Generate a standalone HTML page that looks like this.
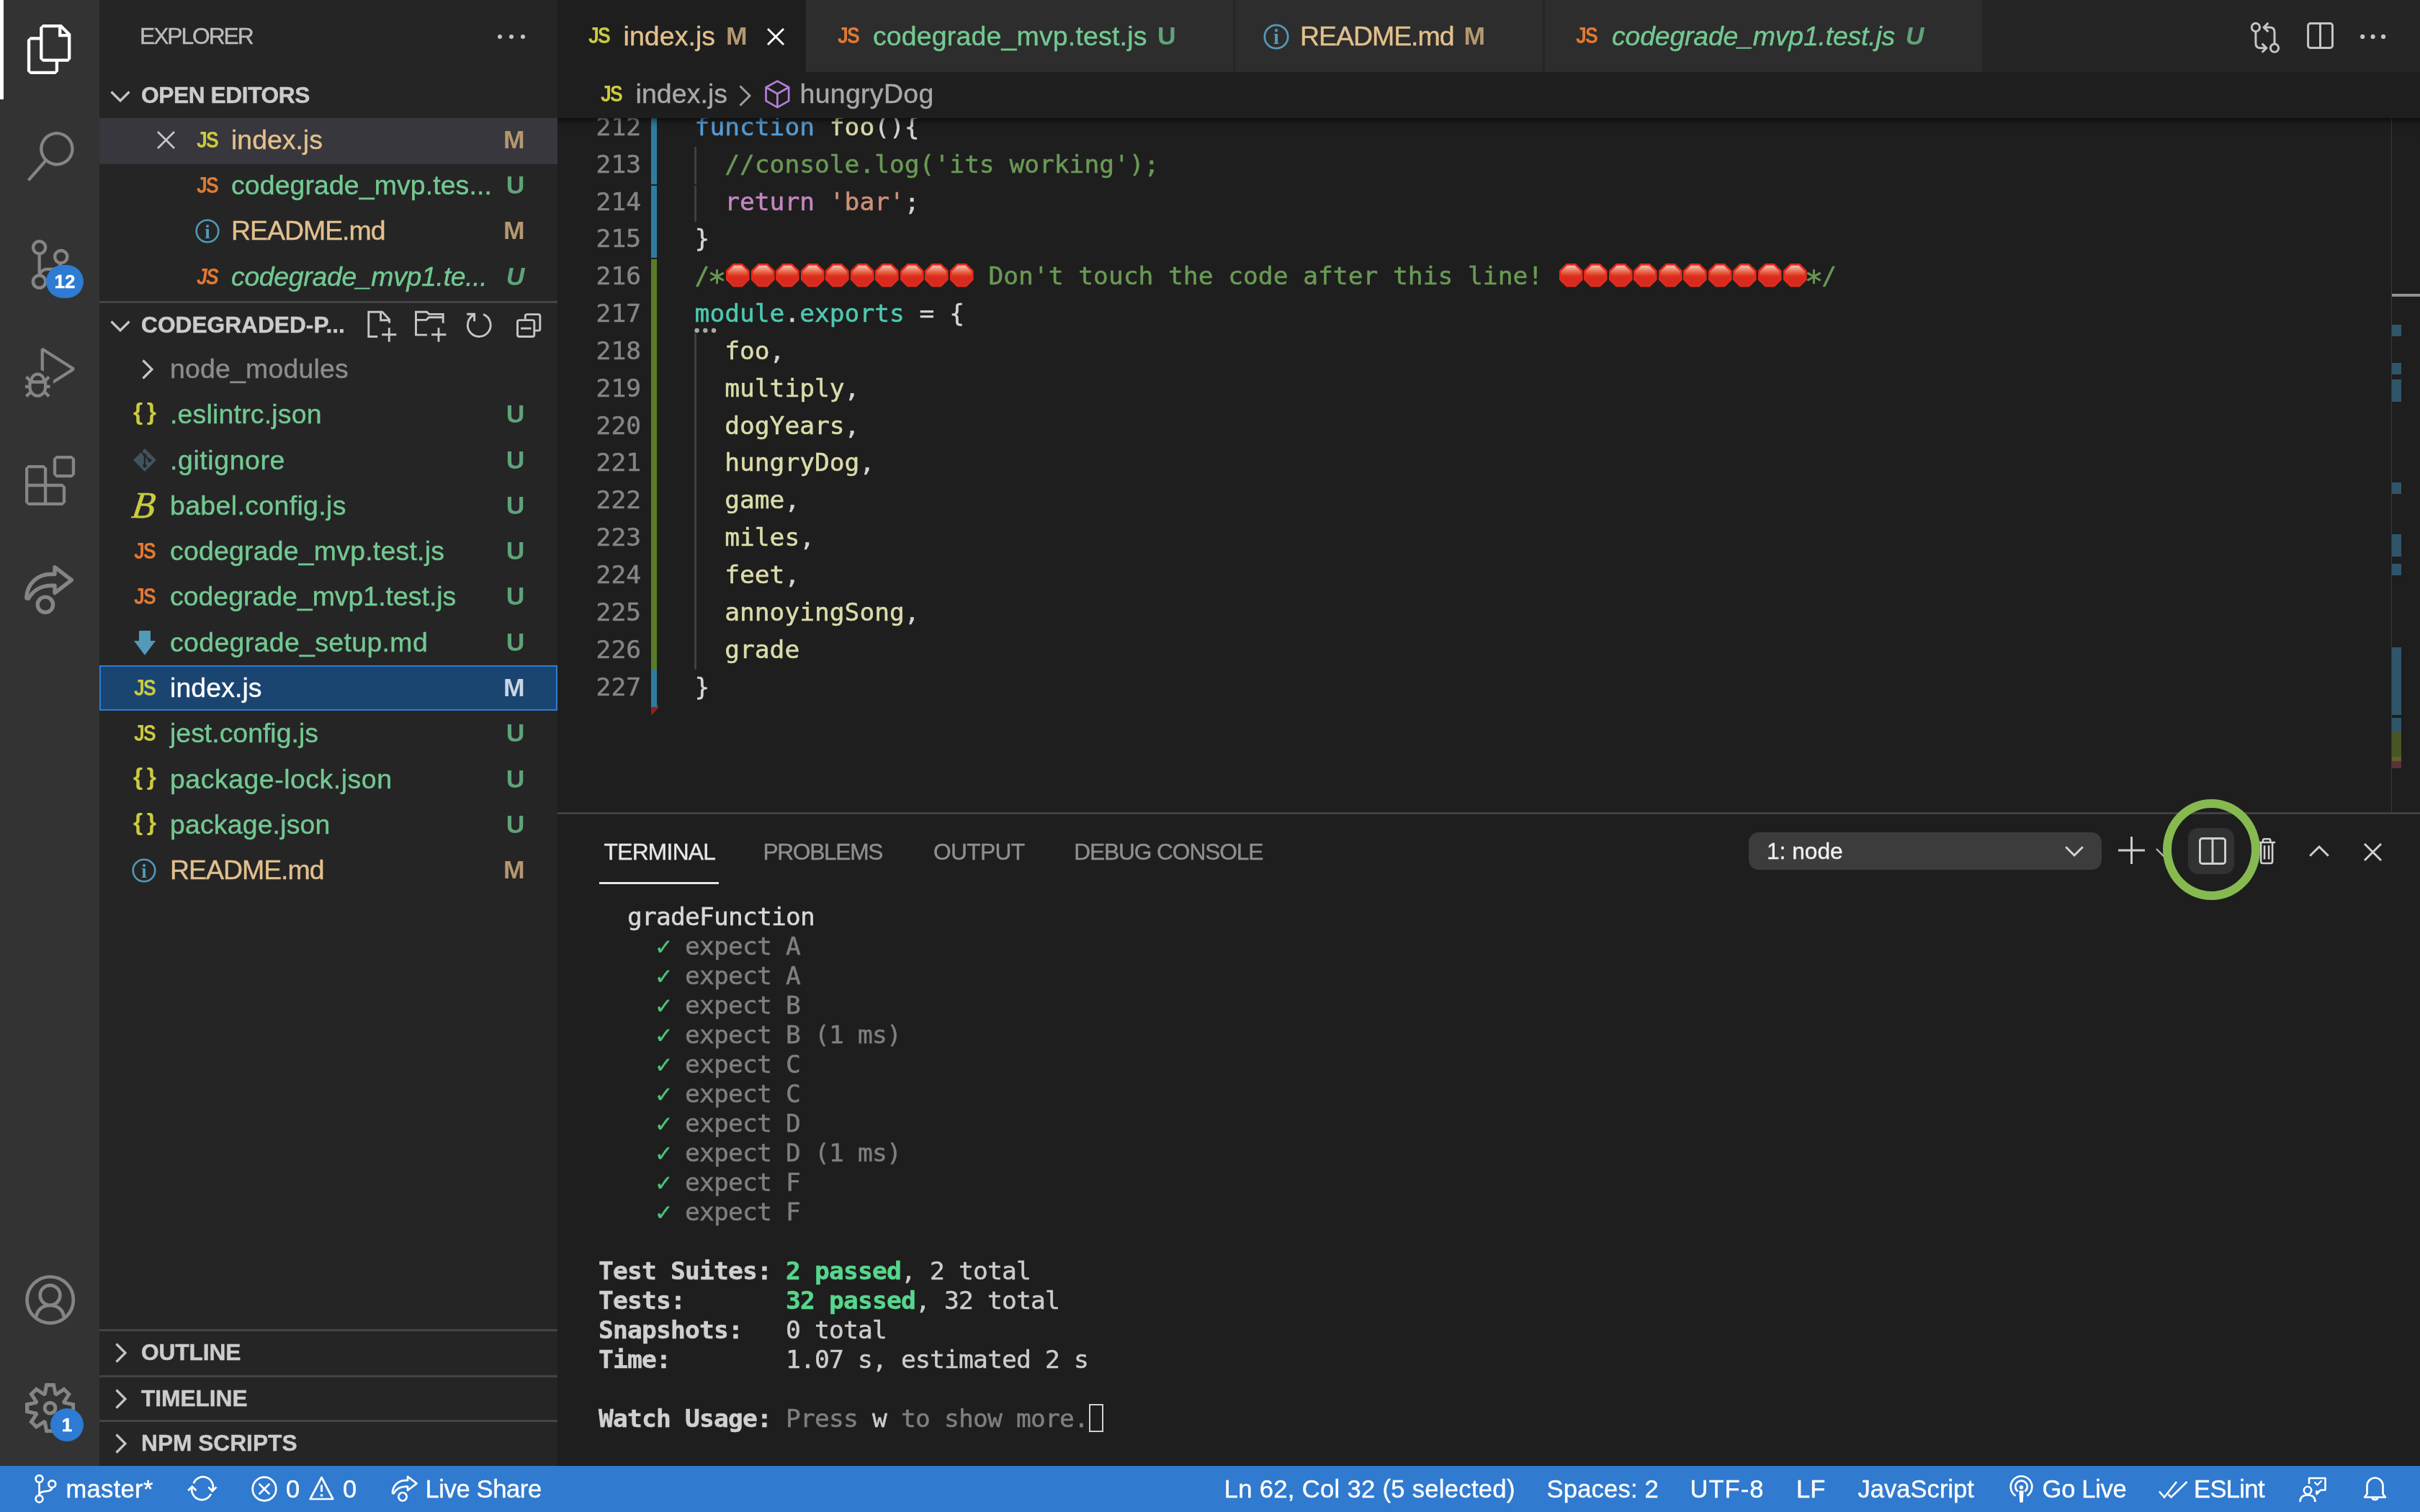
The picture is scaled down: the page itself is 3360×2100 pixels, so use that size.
<!DOCTYPE html>
<html lang="en">
<head>
<meta charset="utf-8">
<title>index.js — codegraded-project — Visual Studio Code</title>
<style>
html,body{margin:0;padding:0;width:3360px;height:2100px;overflow:hidden;background:#1e1e1e;}
body{font-family:"Liberation Sans",sans-serif;position:relative;color:#cccccc;-webkit-font-smoothing:antialiased;-webkit-text-stroke:0.4px;}
div,span,svg{box-sizing:border-box;}
#activity,#sidebar,#tabs,#crumbs,#editor,#panel,#status,#anno{will-change:transform;}
.abs{position:absolute;}
svg{display:block;overflow:visible;}
/* ---------- activity bar ---------- */
#activity{position:absolute;left:0;top:0;width:138px;height:2037px;background:#333333;}
#activity .ind{position:absolute;left:0;top:0;width:5px;height:138px;background:#ffffff;}
#activity svg{position:absolute;}
.badge{position:absolute;border-radius:50%;background:#2d7bd2;color:#fff;font-weight:bold;text-align:center;}
/* ---------- sidebar ---------- */
#sidebar{position:absolute;left:138px;top:0;width:636px;height:2037px;background:#252526;overflow:hidden;}
.sbtitle{position:absolute;left:56px;top:0;height:101px;line-height:101px;font-size:31.7px;color:#bbbbbb;letter-spacing:-2px;}
.hdr{position:absolute;left:0;width:636px;height:63.36px;line-height:63.36px;font-size:31.7px;font-weight:bold;color:#cccccc;}
.hdr .t{position:absolute;left:58px;top:0;white-space:nowrap;}
.hdr svg{position:absolute;}
.hline{position:absolute;left:0;width:636px;height:3px;background:#444444;}
.row{position:absolute;left:0;width:636px;height:63.36px;line-height:63.36px;font-size:37.44px;white-space:nowrap;}
.row .l{position:absolute;top:0;}
.row .s{position:absolute;top:0;right:45.5px;text-align:right;font-size:35.5px;font-weight:bold;-webkit-text-stroke:0;}
.row svg,.row .ic{position:absolute;}
.g{color:#73c991;} .m{color:#e2c08d;} .gs{color:#5fa379;} .ms{color:#b49870;}
.jsy{color:#cbcb41;} .jso{color:#e37933;} .w{color:#ffffff;} .ws{color:#c9d6e4;}
.ic.br{font-size:34px;letter-spacing:-2px;transform:translateY(-4.5px);} .ic.bb{font-family:"Liberation Serif",serif;font-style:italic;font-weight:normal;font-size:52px;transform:translate(-2px,-1px) skewX(-8deg);-webkit-text-stroke:0.6px;}
.ic{font-weight:bold;font-size:31px;letter-spacing:-2px;transform:scaleX(.86);transform-origin:0 50%;-webkit-text-stroke:0;}
/* ---------- status bar ---------- */
#status{position:absolute;left:0;top:2036px;width:3360px;height:64px;background:#307acf;color:#ffffff;font-size:34.56px;line-height:64px;white-space:nowrap;}
#status .t{position:absolute;top:0;}
#status svg{position:absolute;}
/* ---------- editor ---------- */
#tabs{position:absolute;left:774px;top:0;width:2586px;height:100px;background:#252526;}
.tab{position:absolute;top:0;height:100px;background:#2d2d2d;line-height:100px;font-size:37.44px;white-space:nowrap;}
.tab.act{background:#1e1e1e;}
.tab .l,.tab .s{position:absolute;top:0;}
.tab .s{font-size:35.5px;font-weight:bold;-webkit-text-stroke:0;}
.tab svg,.tab .ic{position:absolute;}
#crumbs{position:absolute;left:774px;top:100px;width:2586px;height:64px;background:#1e1e1e;line-height:61px;font-size:37.44px;color:#a9a9a9;white-space:nowrap;z-index:5;}
#crumbs .l{position:absolute;top:0;}
#crumbs svg,#crumbs .ic{position:absolute;}
#editor{position:absolute;left:774px;top:164px;width:2586px;height:964px;background:#1e1e1e;overflow:hidden;}
.code{font-family:"DejaVu Sans Mono","Liberation Mono",monospace;font-size:34.56px;-webkit-text-stroke:0.5px;}
.ln{position:absolute;left:0;width:116px;text-align:right;height:51.84px;line-height:51.84px;color:#858585;}
.cl{position:absolute;left:190.6px;height:51.84px;line-height:51.84px;white-space:pre;color:#d4d4d4;}
.k{color:#569cd6;} .f{color:#dcdcaa;} .c{color:#6a9955;} .r{color:#c586c0;} .st{color:#ce9178;} .ty{color:#4ec9b0;} .v{color:#dcdcaa;}
.em{display:inline-block;width:34.56px;height:34.56px;vertical-align:-3.8px;margin-left:0.8px;margin-right:-0.8px;}
.ast{display:inline-block;transform:translateY(8px) scale(1.25);}
/* ---------- panel ---------- */
#panel{position:absolute;left:774px;top:1128px;width:2586px;height:909px;background:#1e1e1e;border-top:3px solid #414141;overflow:hidden;}
.ptab{position:absolute;top:22px;height:60px;line-height:60px;font-size:31.7px;color:#8f8f8f;white-space:nowrap;}
.ptab.on{color:#e7e7e7;}
.tl{position:absolute;left:57px;height:41px;line-height:41px;white-space:pre;color:#cccccc;letter-spacing:-0.8px;}
.tw{color:#d8d8d8;} .cur{display:inline-block;width:20px;height:39px;border:2.5px solid #d0d0d0;vertical-align:-7.5px;margin-left:1px;}
.tg{color:#4ec27a;} .td{color:#7f7f7f;} .tb{font-weight:bold;color:#d0d0d0;} .tgb{color:#58d68d;font-weight:bold;}
</style>
</head>
<body>
<div id="activity">
  <div class="ind"></div>
  <!-- files -->
  <svg style="left:34.5px;top:34px" width="69.12" height="69.12" viewBox="0 0 24 24" fill="#ffffff"><path d="M17.5 0h-9L7 1.5V6H2.5L1 7.5v15.07L2.5 24h12.07L16 22.57V18h4.7l1.3-1.43V4.5L17.5 0zm0 2.12l2.38 2.38H17.5V2.12zm-3 20.38h-12v-15H7v9.07L8.5 18h6v4.5zm6-6h-12v-15H16V6h4.5v10.5z"/></svg>
  <!-- search -->
  <svg style="left:34.5px;top:183px" width="69.12" height="69.12" viewBox="0 0 24 24" fill="#858585"><path d="M15.25 0a8.25 8.25 0 0 0-6.18 13.72L1 22.88l1.12 1 8.05-9.12A8.251 8.251 0 1 0 15.25.01V0zm0 15a6.75 6.75 0 1 1 0-13.5 6.75 6.75 0 0 1 0 13.5z"/></svg>
  <!-- source control -->
  <svg style="left:34.5px;top:333.3px" width="69.12" height="69.12" viewBox="0 0 24 24" fill="#858585"><path d="M21.007 8.222A3.738 3.738 0 0 0 15.045 5.2a3.737 3.737 0 0 0 1.156 6.583 2.988 2.988 0 0 1-2.668 1.67h-2.99a4.456 4.456 0 0 0-2.989 1.165V7.4a3.737 3.737 0 1 0-1.494 0v9.117a3.776 3.776 0 1 0 1.816.099 2.99 2.99 0 0 1 2.668-1.667h2.99a4.484 4.484 0 0 0 4.223-3.039 3.736 3.736 0 0 0 3.25-3.687zM4.565 3.738a2.242 2.242 0 1 1 4.484 0 2.242 2.242 0 0 1-4.484 0zm4.484 16.441a2.242 2.242 0 1 1-4.484 0 2.242 2.242 0 0 1 4.484 0zm8.221-9.715a2.242 2.242 0 1 1 0-4.485 2.242 2.242 0 0 1 0 4.485z"/></svg>
  <div class="badge" style="left:64px;top:368px;width:52px;height:46px;border-radius:23px;line-height:46px;font-size:26px;">12</div>
  <!-- debug -->
  <svg style="left:34.5px;top:483.3px" width="69.12" height="69.12" viewBox="0 0 24 24" fill="#858585"><path d="M10.94 13.5l-1.32 1.32a3.73 3.73 0 0 0-7.24 0L1.06 13.5 0 14.56l1.72 1.72-.22.22V18H0v1.5h1.5v.08c.077.489.214.966.41 1.42L0 22.94 1.06 24l1.65-1.65A4.308 4.308 0 0 0 6 24a4.31 4.31 0 0 0 3.29-1.65L10.94 24 12 22.94 10.09 21c.198-.464.336-.951.41-1.45v-.1H12V18h-1.5v-1.5l-.22-.22L12 14.56l-1.06-1.06zM6 13.5a2.25 2.25 0 0 1 2.25 2.25h-4.5A2.25 2.25 0 0 1 6 13.5zm3 6a3.33 3.33 0 0 1-3 3 3.33 3.33 0 0 1-3-3v-2.25h6v2.25zm14.76-9.9v1.26L13.5 17.37V15.6l8.5-5.37L9 2v9.46a5.07 5.07 0 0 0-1.5-.72V.63L8.64 0l15.12 9.6z"/></svg>
  <!-- extensions -->
  <svg style="left:34.5px;top:633px" width="69.12" height="69.12" viewBox="0 0 24 24" fill="#858585"><path d="M13.5 1.5L15 0h7.5L24 1.5V9l-1.5 1.5H15L13.5 9V1.5zm1.5 0V9h7.5V1.5H15zM0 15V6l1.5-1.5H9L10.5 6v7.5H18l1.5 1.5v7.5L18 24H1.5L0 22.5V15zm9-1.5V6H1.5v7.5H9zM9 15H1.5v7.5H9V15zm1.5 7.5H18V15h-7.5v7.5z"/></svg>
  <!-- live share -->
  <svg style="left:20px;top:760px" width="100" height="120" viewBox="0 0 100 120" fill="none" stroke="#858585" stroke-width="5.4" stroke-linejoin="round"><path d="M16.7 70.6 C17.5 50 33 37.5 50 37.5 L56 37.5 L56 27.6 L79.4 45.6 L56 63.5 L56 53.3 L52 53.3 C38 53.3 26 59.5 19.5 71.5 Z"/><circle cx="42.9" cy="79.8" r="10.7"/></svg>
  <!-- account -->
  <svg style="left:34.5px;top:1771px" width="69.12" height="69.12" viewBox="0 0 24 24" fill="none" stroke="#858585" stroke-width="1.62"><circle cx="12.05" cy="11.95" r="11.18"/><circle cx="12" cy="9.72" r="4.8"/><path d="M5.3 20.2 C5.8 16.5 8.5 14.6 12 14.6 C15.5 14.6 18.2 16.5 18.7 20.2"/></svg>
  <!-- gear -->
  <svg style="left:34.5px;top:1920.5px" width="69.12" height="69.12" viewBox="0 0 24 24" fill="#858585"><path fill-rule="evenodd" d="M19.85 8.75l4.15.83v4.84l-4.15.83 2.35 3.52-3.43 3.43-3.52-2.35-.83 4.15H9.58l-.83-4.15-3.52 2.35-3.43-3.43 2.35-3.52L0 14.42V9.58l4.15-.83L1.8 5.23 5.23 1.8l3.52 2.35L9.58 0h4.84l.83 4.15 3.52-2.35 3.43 3.43-2.35 3.52zm-1.57 5.07l4-.81v-2l-4-.81-.54-1.3 2.29-3.43-1.43-1.43-3.43 2.29-1.3-.54-.81-4h-2l-.81 4-1.3.54-3.43-2.29-1.43 1.43L6.38 8.9l-.54 1.3-4 .81v2l4 .81.54 1.3-2.29 3.43 1.43 1.43 3.43-2.29 1.3.54.81 4h2l.81-4 1.3-.54 3.43 2.29 1.43-1.43-2.29-3.43.54-1.3zm-8.186-4.672A3.43 3.43 0 0 1 12 8.57 3.44 3.44 0 0 1 15.43 12a3.43 3.43 0 1 1-5.336-2.852zm.956 4.274c.281.188.612.288.95.288A1.7 1.7 0 0 0 13.71 12a1.71 1.71 0 1 0-2.66 1.422z"/></svg>
  <div class="badge" style="left:70px;top:1956px;width:46px;height:46px;line-height:46px;font-size:26px;">1</div>
</div>
<div id="sidebar">
  <div class="sbtitle">EXPLORER</div>
  <svg class="abs" style="left:552px;top:47px" width="40" height="8" viewBox="0 0 40 8" fill="#c5c5c5"><circle cx="4" cy="4" r="3"/><circle cx="20" cy="4" r="3"/><circle cx="36" cy="4" r="3"/></svg>
  <div class="hdr" style="top:100.8px"><svg style="left:15px;top:25px" width="28" height="16" viewBox="0 0 28 16" fill="none" stroke="#c5c5c5" stroke-width="3.2"><path d="M1.5 1.5 L14 14 L26.5 1.5"/></svg><span class="t" style="letter-spacing:-0.4px">OPEN EDITORS</span></div>
  <div class="abs" style="left:0;top:163.7px;width:636px;height:64.3px;background:#37373d"></div>
  <div class="row" style="top:162.9px"><svg style="left:80px;top:19px" width="25" height="25" viewBox="0 0 25 25" fill="none" stroke="#c5c5c5" stroke-width="2.8"><path d="M1 1 L24 24 M24 1 L1 24"/></svg><span class="ic jsy" style="left:135px;top:0">JS</span><span class="l m" style="left:183px">index.js</span><span class="s ms">M</span></div>
  <div class="row" style="top:226.10px"><span class="ic jso" style="left:135px;top:0">JS</span><span class="l g" style="left:183px;letter-spacing:0.1px">codegrade_mvp.tes...</span><span class="s gs">U</span></div>
  <div class="row" style="top:289.30px"><svg style="left:133px;top:15px" width="34" height="34" viewBox="0 0 34 34"><circle cx="17" cy="17" r="15.3" fill="none" stroke="#519aba" stroke-width="2.6"/><text x="17" y="26.5" text-anchor="middle" font-family="Liberation Serif,serif" font-weight="bold" font-size="27" fill="#519aba">i</text></svg><span class="l m" style="left:183px;letter-spacing:-1.0px">README.md</span><span class="s ms">M</span></div>
  <div class="row" style="top:352.50px;font-style:italic"><span class="ic jso" style="left:135px;top:0">JS</span><span class="l g" style="left:183px;letter-spacing:-0.33px">codegrade_mvp1.te...</span><span class="s gs">U</span></div>
  <div class="hline" style="top:418px"></div>
  <div class="hdr" style="top:420px"><svg style="left:15px;top:25px" width="28" height="16" viewBox="0 0 28 16" fill="none" stroke="#c5c5c5" stroke-width="3.2"><path d="M1.5 1.5 L14 14 L26.5 1.5"/></svg><span class="t">CODEGRADED-P...</span>
    <svg style="left:352px;top:0.5px" width="290" height="65" viewBox="0 0 290 65" fill="none" stroke="#c5c5c5" stroke-width="2.9"><path d="M34.2 46.5 L21.8 46.5 L21.8 12.2 L40.7 12.2 L50.6 22.8 L50.6 27.8 M38.6 12.2 L38.6 23.7 L50.6 23.7 M50.3 34.2 L50.3 53.7 M40.1 43.7 L60.3 43.7"/><path d="M103 44.1 L87.5 44.1 L87.5 12.2 L102.5 12.2 L105.7 15.4 L125.2 15.4 L125.2 27.8 M87.5 23.4 L101.9 23.4 L105.5 19.8 L125.2 19.8 M119 34.2 L119 53.7 M109 43.7 L129.4 43.7"/><path d="M181 15.7 A15.9 15.9 0 1 1 167.6 16.6 M158.2 15.3 L168.6 15.3 L168.6 25.2"/><path d="M239.3 22.2 L239.3 18 Q239.3 15.6 241.7 15.6 L257.4 15.6 Q259.8 15.6 259.8 18 L259.8 35.7 Q259.8 38.1 257.4 38.1 L252.8 38.1"/><rect x="228.5" y="23.6" width="23.3" height="22.9" rx="2.6"/><path d="M233 35.1 L247.5 35.1"/></svg>
  </div>
  <div class="row" style="top:480.90px"><svg style="left:59px;top:18px" width="16" height="28" viewBox="0 0 16 28" fill="none" stroke="#c5c5c5" stroke-width="3.2"><path d="M1.5 1.5 L14 14 L1.5 26.5"/></svg><span class="l" style="left:98px;color:#8c8c8c;letter-spacing:0.2px">node_modules</span></div>
  <div class="row" style="top:544.20px"><span class="ic jsy br" style="left:47px;top:0">{ }</span><span class="l g" style="left:98px;letter-spacing:0.2px">.eslintrc.json</span><span class="s gs">U</span></div>
  <div class="row" style="top:607.50px"><svg style="left:47px;top:15.5px" width="32" height="32" viewBox="0 0 32 32"><path d="M16 0 L32 16 L16 32 L0 16 Z" fill="#41535b"/><path d="M10.5 3.5 L16 9.5 L16 23.5 M16 9.5 L22.5 16" fill="none" stroke="#252526" stroke-width="2.2"/><circle cx="16" cy="23.8" r="2.6" fill="#252526"/><circle cx="22.7" cy="16.3" r="2.6" fill="#252526"/><circle cx="16" cy="9.3" r="2.3" fill="#252526"/></svg><span class="l g" style="left:98px;letter-spacing:0.6px">.gitignore</span><span class="s gs">U</span></div>
  <div class="row" style="top:670.80px"><span class="ic jsy bb" style="left:48px;top:0">B</span><span class="l g" style="left:98px;letter-spacing:0.37px">babel.config.js</span><span class="s gs">U</span></div>
  <div class="row" style="top:734.10px"><span class="ic jso" style="left:48px;top:0">JS</span><span class="l g" style="left:98px;letter-spacing:0.22px">codegrade_mvp.test.js</span><span class="s gs">U</span></div>
  <div class="row" style="top:797.40px"><span class="ic jso" style="left:48px;top:0">JS</span><span class="l g" style="left:98px">codegrade_mvp1.test.js</span><span class="s gs">U</span></div>
  <div class="row" style="top:860.70px"><svg style="left:48px;top:15px" width="30" height="34" viewBox="0 0 30 34"><path d="M7 0 L23 0 L23 14 L30 14 L15 34 L0 14 L7 14 Z" fill="#519aba"/></svg><span class="l g" style="left:98px;letter-spacing:0.36px">codegrade_setup.md</span><span class="s gs">U</span></div>
  <div class="row" style="top:924.00px;background:#1a4571;outline:2px solid #2f7bd4;outline-offset:-2px"><span class="ic jsy" style="left:48px;top:0">JS</span><span class="l w" style="left:98px;letter-spacing:0.1px">index.js</span><span class="s ws">M</span></div>
  <div class="row" style="top:987.30px"><span class="ic jsy" style="left:48px;top:0">JS</span><span class="l g" style="left:98px">jest.config.js</span><span class="s gs">U</span></div>
  <div class="row" style="top:1050.60px"><span class="ic jsy br" style="left:47px;top:0">{ }</span><span class="l g" style="left:98px;letter-spacing:0.53px">package-lock.json</span><span class="s gs">U</span></div>
  <div class="row" style="top:1113.90px"><span class="ic jsy br" style="left:47px;top:0">{ }</span><span class="l g" style="left:98px;letter-spacing:0.16px">package.json</span><span class="s gs">U</span></div>
  <div class="row" style="top:1177.20px"><svg style="left:45px;top:15px" width="34" height="34" viewBox="0 0 34 34"><circle cx="17" cy="17" r="15.3" fill="none" stroke="#519aba" stroke-width="2.6"/><text x="17" y="26.5" text-anchor="middle" font-family="Liberation Serif,serif" font-weight="bold" font-size="27" fill="#519aba">i</text></svg><span class="l m" style="left:98px;letter-spacing:-1.0px">README.md</span><span class="s ms">M</span></div>
  <div class="hline" style="top:1846px"></div>
  <div class="hdr" style="top:1847px"><svg style="left:22px;top:18px" width="16" height="28" viewBox="0 0 16 28" fill="none" stroke="#c5c5c5" stroke-width="3.2"><path d="M1.5 1.5 L14 14 L1.5 26.5"/></svg><span class="t" style="letter-spacing:-0.1px">OUTLINE</span></div>
  <div class="hline" style="top:1910px"></div>
  <div class="hdr" style="top:1911px"><svg style="left:22px;top:18px" width="16" height="28" viewBox="0 0 16 28" fill="none" stroke="#c5c5c5" stroke-width="3.2"><path d="M1.5 1.5 L14 14 L1.5 26.5"/></svg><span class="t" style="letter-spacing:-0.05px">TIMELINE</span></div>
  <div class="hline" style="top:1972px"></div>
  <div class="hdr" style="top:1973px"><svg style="left:22px;top:18px" width="16" height="28" viewBox="0 0 16 28" fill="none" stroke="#c5c5c5" stroke-width="3.2"><path d="M1.5 1.5 L14 14 L1.5 26.5"/></svg><span class="t" style="letter-spacing:0px">NPM SCRIPTS</span></div>
</div>
<div id="tabs">
  <div class="tab act" style="left:0;width:345px">
    <span class="ic jsy" style="left:43px;top:0">JS</span><span class="l m" style="left:91.5px;letter-spacing:0.1px">index.js</span><span class="s ms" style="left:234px">M</span>
    <svg style="left:291px;top:39px" width="24" height="24" viewBox="0 0 24 24" fill="none" stroke="#ffffff" stroke-width="2.9"><path d="M1 1 L23 23 M23 1 L1 23"/></svg>
  </div>
  <div class="tab" style="left:345px;width:593px">
    <span class="ic jso" style="left:44px;top:0">JS</span><span class="l g" style="left:92.9px;letter-spacing:0.2px">codegrade_mvp.test.js</span><span class="s gs" style="left:488px">U</span>
  </div>
  <div class="tab" style="left:941px;width:427px">
    <svg style="left:39px;top:33px" width="36" height="36" viewBox="0 0 34 34"><circle cx="17" cy="17" r="15.3" fill="none" stroke="#519aba" stroke-width="2.6"/><text x="17" y="26.5" text-anchor="middle" font-family="Liberation Serif,serif" font-weight="bold" font-size="27" fill="#519aba">i</text></svg>
    <span class="l m" style="left:90px;letter-spacing:-1px">README.md</span><span class="s ms" style="left:317.5px">M</span>
  </div>
  <div class="tab" style="left:1371px;width:607px;font-style:italic">
    <span class="ic jso" style="left:43px;top:0;font-style:normal">JS</span><span class="l g" style="left:93px;letter-spacing:-0.19px">codegrade_mvp1.test.js</span><span class="s gs" style="left:500.7px">U</span>
  </div>
  <!-- editor actions -->
  <svg class="abs" style="left:2326px;top:10px" width="240" height="85" viewBox="0 0 240 85" fill="none" stroke="#c5c5c5" stroke-width="3">
    <circle cx="31.9" cy="28" r="5.65"/><circle cx="58" cy="56.7" r="5.65"/>
    <path d="M31.9 34 L31.9 49.9 Q31.9 56.7 38.7 56.7 L46 56.7 M40.7 50.6 L46.8 56.7 L40.7 62.8"/>
    <path d="M58 50.7 L58 34.8 Q58 28 51.2 28 L44 28 M49.3 21.9 L43.2 28 L49.3 34.1"/>
    <rect x="104.6" y="22.5" width="33.9" height="34" rx="3.2"/><path d="M121.5 22.5 L121.5 56.5"/>
    <g fill="#c5c5c5" stroke="none"><circle cx="180.2" cy="40.9" r="3.1"/><circle cx="194.6" cy="40.9" r="3.1"/><circle cx="209.1" cy="40.9" r="3.1"/></g>
  </svg>
</div>
<div id="crumbs">
  <span class="ic jsy" style="left:60px;top:0">JS</span><span class="l" style="left:108.5px;letter-spacing:0.1px">index.js</span>
  <svg style="left:252px;top:18.3px" width="17" height="30" viewBox="0 0 17 30" fill="none" stroke="#a0a0a0" stroke-width="2.9"><path d="M1.5 1.5 L15 15 L1.5 28.5"/></svg>
  <svg style="left:287.7px;top:10.6px" width="34.7" height="39.8" viewBox="0 0 36 41" fill="none" stroke="#b180d7" stroke-width="2.8" stroke-linejoin="round"><path d="M18 1.6 L34.4 10.5 L34.4 30 L18 39.4 L1.6 30 L1.6 10.5 Z M1.6 10.5 L18 19.8 L34.4 10.5 M18 19.8 L18 39.4"/></svg>
  <span class="l" style="left:336.5px;letter-spacing:0.33px">hungryDog</span>
</div>
<div id="editor" class="code">
  <svg width="0" height="0" style="position:absolute"><defs><linearGradient id="sg" x1="0" y1="0" x2="0" y2="1"><stop offset="0" stop-color="#f9c3b7"/><stop offset="0.42" stop-color="#e2502f"/><stop offset="0.56" stop-color="#dc2c1f"/><stop offset="1" stop-color="#d32a1c"/></linearGradient></defs></svg>
  <div class="abs" style="left:130px;top:0.0px;width:8.4px;height:91.9px;background:#2f7c9e"></div>
  <div class="abs" style="left:130px;top:93.9px;width:8.4px;height:100.0px;background:#2f7c9e"></div>
  <div class="abs" style="left:130px;top:195.9px;width:8.4px;height:570.1px;background:#587c27"></div>
  <div class="abs" style="left:130px;top:766.0px;width:8.4px;height:52.2px;background:#2f7c9e"></div>
  <div class="abs" style="left:190.3px;top:39.9px;width:2.7px;height:52.0px;background:#404040"></div>
  <div class="abs" style="left:190.3px;top:93.9px;width:2.7px;height:50.0px;background:#404040"></div>
  <div class="abs" style="left:190.3px;top:298.5px;width:2.7px;height:467.3px;background:#404040"></div>
  <div class="ln" style="top:-13.10px">212</div><div class="cl" style="top:-13.10px"><span class="k">function</span> <span class="f">foo</span>(){</div>
  <div class="ln" style="top:38.74px">213</div><div class="cl" style="top:38.74px">  <span class="c">//console.log('its working');</span></div>
  <div class="ln" style="top:90.58px">214</div><div class="cl" style="top:90.58px">  <span class="r">return</span> <span class="st">'bar'</span>;</div>
  <div class="ln" style="top:142.42px">215</div><div class="cl" style="top:142.42px">}</div>
  <div class="ln" style="top:194.26px">216</div><div class="cl" style="top:194.26px"><span class="c">/<span class="ast">*</span><svg class="em" viewBox="0 0 36 36"><path d="M11.3 1 L24.7 1 L35 11.3 L35 24.7 L24.7 35 L11.3 35 L1 24.7 L1 11.3 Z" fill="#e62a1c"/><path d="M12.5 3.8 L23.5 3.8 L32.2 12.5 L32.2 23.5 L23.5 32.2 L12.5 32.2 L3.8 23.5 L3.8 12.5 Z" fill="url(#sg)"/></svg><svg class="em" viewBox="0 0 36 36"><path d="M11.3 1 L24.7 1 L35 11.3 L35 24.7 L24.7 35 L11.3 35 L1 24.7 L1 11.3 Z" fill="#e62a1c"/><path d="M12.5 3.8 L23.5 3.8 L32.2 12.5 L32.2 23.5 L23.5 32.2 L12.5 32.2 L3.8 23.5 L3.8 12.5 Z" fill="url(#sg)"/></svg><svg class="em" viewBox="0 0 36 36"><path d="M11.3 1 L24.7 1 L35 11.3 L35 24.7 L24.7 35 L11.3 35 L1 24.7 L1 11.3 Z" fill="#e62a1c"/><path d="M12.5 3.8 L23.5 3.8 L32.2 12.5 L32.2 23.5 L23.5 32.2 L12.5 32.2 L3.8 23.5 L3.8 12.5 Z" fill="url(#sg)"/></svg><svg class="em" viewBox="0 0 36 36"><path d="M11.3 1 L24.7 1 L35 11.3 L35 24.7 L24.7 35 L11.3 35 L1 24.7 L1 11.3 Z" fill="#e62a1c"/><path d="M12.5 3.8 L23.5 3.8 L32.2 12.5 L32.2 23.5 L23.5 32.2 L12.5 32.2 L3.8 23.5 L3.8 12.5 Z" fill="url(#sg)"/></svg><svg class="em" viewBox="0 0 36 36"><path d="M11.3 1 L24.7 1 L35 11.3 L35 24.7 L24.7 35 L11.3 35 L1 24.7 L1 11.3 Z" fill="#e62a1c"/><path d="M12.5 3.8 L23.5 3.8 L32.2 12.5 L32.2 23.5 L23.5 32.2 L12.5 32.2 L3.8 23.5 L3.8 12.5 Z" fill="url(#sg)"/></svg><svg class="em" viewBox="0 0 36 36"><path d="M11.3 1 L24.7 1 L35 11.3 L35 24.7 L24.7 35 L11.3 35 L1 24.7 L1 11.3 Z" fill="#e62a1c"/><path d="M12.5 3.8 L23.5 3.8 L32.2 12.5 L32.2 23.5 L23.5 32.2 L12.5 32.2 L3.8 23.5 L3.8 12.5 Z" fill="url(#sg)"/></svg><svg class="em" viewBox="0 0 36 36"><path d="M11.3 1 L24.7 1 L35 11.3 L35 24.7 L24.7 35 L11.3 35 L1 24.7 L1 11.3 Z" fill="#e62a1c"/><path d="M12.5 3.8 L23.5 3.8 L32.2 12.5 L32.2 23.5 L23.5 32.2 L12.5 32.2 L3.8 23.5 L3.8 12.5 Z" fill="url(#sg)"/></svg><svg class="em" viewBox="0 0 36 36"><path d="M11.3 1 L24.7 1 L35 11.3 L35 24.7 L24.7 35 L11.3 35 L1 24.7 L1 11.3 Z" fill="#e62a1c"/><path d="M12.5 3.8 L23.5 3.8 L32.2 12.5 L32.2 23.5 L23.5 32.2 L12.5 32.2 L3.8 23.5 L3.8 12.5 Z" fill="url(#sg)"/></svg><svg class="em" viewBox="0 0 36 36"><path d="M11.3 1 L24.7 1 L35 11.3 L35 24.7 L24.7 35 L11.3 35 L1 24.7 L1 11.3 Z" fill="#e62a1c"/><path d="M12.5 3.8 L23.5 3.8 L32.2 12.5 L32.2 23.5 L23.5 32.2 L12.5 32.2 L3.8 23.5 L3.8 12.5 Z" fill="url(#sg)"/></svg><svg class="em" viewBox="0 0 36 36"><path d="M11.3 1 L24.7 1 L35 11.3 L35 24.7 L24.7 35 L11.3 35 L1 24.7 L1 11.3 Z" fill="#e62a1c"/><path d="M12.5 3.8 L23.5 3.8 L32.2 12.5 L32.2 23.5 L23.5 32.2 L12.5 32.2 L3.8 23.5 L3.8 12.5 Z" fill="url(#sg)"/></svg> Don't touch the code after this line! <svg class="em" viewBox="0 0 36 36"><path d="M11.3 1 L24.7 1 L35 11.3 L35 24.7 L24.7 35 L11.3 35 L1 24.7 L1 11.3 Z" fill="#e62a1c"/><path d="M12.5 3.8 L23.5 3.8 L32.2 12.5 L32.2 23.5 L23.5 32.2 L12.5 32.2 L3.8 23.5 L3.8 12.5 Z" fill="url(#sg)"/></svg><svg class="em" viewBox="0 0 36 36"><path d="M11.3 1 L24.7 1 L35 11.3 L35 24.7 L24.7 35 L11.3 35 L1 24.7 L1 11.3 Z" fill="#e62a1c"/><path d="M12.5 3.8 L23.5 3.8 L32.2 12.5 L32.2 23.5 L23.5 32.2 L12.5 32.2 L3.8 23.5 L3.8 12.5 Z" fill="url(#sg)"/></svg><svg class="em" viewBox="0 0 36 36"><path d="M11.3 1 L24.7 1 L35 11.3 L35 24.7 L24.7 35 L11.3 35 L1 24.7 L1 11.3 Z" fill="#e62a1c"/><path d="M12.5 3.8 L23.5 3.8 L32.2 12.5 L32.2 23.5 L23.5 32.2 L12.5 32.2 L3.8 23.5 L3.8 12.5 Z" fill="url(#sg)"/></svg><svg class="em" viewBox="0 0 36 36"><path d="M11.3 1 L24.7 1 L35 11.3 L35 24.7 L24.7 35 L11.3 35 L1 24.7 L1 11.3 Z" fill="#e62a1c"/><path d="M12.5 3.8 L23.5 3.8 L32.2 12.5 L32.2 23.5 L23.5 32.2 L12.5 32.2 L3.8 23.5 L3.8 12.5 Z" fill="url(#sg)"/></svg><svg class="em" viewBox="0 0 36 36"><path d="M11.3 1 L24.7 1 L35 11.3 L35 24.7 L24.7 35 L11.3 35 L1 24.7 L1 11.3 Z" fill="#e62a1c"/><path d="M12.5 3.8 L23.5 3.8 L32.2 12.5 L32.2 23.5 L23.5 32.2 L12.5 32.2 L3.8 23.5 L3.8 12.5 Z" fill="url(#sg)"/></svg><svg class="em" viewBox="0 0 36 36"><path d="M11.3 1 L24.7 1 L35 11.3 L35 24.7 L24.7 35 L11.3 35 L1 24.7 L1 11.3 Z" fill="#e62a1c"/><path d="M12.5 3.8 L23.5 3.8 L32.2 12.5 L32.2 23.5 L23.5 32.2 L12.5 32.2 L3.8 23.5 L3.8 12.5 Z" fill="url(#sg)"/></svg><svg class="em" viewBox="0 0 36 36"><path d="M11.3 1 L24.7 1 L35 11.3 L35 24.7 L24.7 35 L11.3 35 L1 24.7 L1 11.3 Z" fill="#e62a1c"/><path d="M12.5 3.8 L23.5 3.8 L32.2 12.5 L32.2 23.5 L23.5 32.2 L12.5 32.2 L3.8 23.5 L3.8 12.5 Z" fill="url(#sg)"/></svg><svg class="em" viewBox="0 0 36 36"><path d="M11.3 1 L24.7 1 L35 11.3 L35 24.7 L24.7 35 L11.3 35 L1 24.7 L1 11.3 Z" fill="#e62a1c"/><path d="M12.5 3.8 L23.5 3.8 L32.2 12.5 L32.2 23.5 L23.5 32.2 L12.5 32.2 L3.8 23.5 L3.8 12.5 Z" fill="url(#sg)"/></svg><svg class="em" viewBox="0 0 36 36"><path d="M11.3 1 L24.7 1 L35 11.3 L35 24.7 L24.7 35 L11.3 35 L1 24.7 L1 11.3 Z" fill="#e62a1c"/><path d="M12.5 3.8 L23.5 3.8 L32.2 12.5 L32.2 23.5 L23.5 32.2 L12.5 32.2 L3.8 23.5 L3.8 12.5 Z" fill="url(#sg)"/></svg><svg class="em" viewBox="0 0 36 36"><path d="M11.3 1 L24.7 1 L35 11.3 L35 24.7 L24.7 35 L11.3 35 L1 24.7 L1 11.3 Z" fill="#e62a1c"/><path d="M12.5 3.8 L23.5 3.8 L32.2 12.5 L32.2 23.5 L23.5 32.2 L12.5 32.2 L3.8 23.5 L3.8 12.5 Z" fill="url(#sg)"/></svg><span class="ast">*</span>/</span></div>
  <div class="ln" style="top:246.10px">217</div><div class="cl" style="top:246.10px"><span class="ty">module</span>.<span class="ty">exports</span> = {</div>
  <div class="ln" style="top:297.94px">218</div><div class="cl" style="top:297.94px">  <span class="v">foo</span>,</div>
  <div class="ln" style="top:349.78px">219</div><div class="cl" style="top:349.78px">  <span class="v">multiply</span>,</div>
  <div class="ln" style="top:401.62px">220</div><div class="cl" style="top:401.62px">  <span class="v">dogYears</span>,</div>
  <div class="ln" style="top:453.46px">221</div><div class="cl" style="top:453.46px">  <span class="v">hungryDog</span>,</div>
  <div class="ln" style="top:505.30px">222</div><div class="cl" style="top:505.30px">  <span class="v">game</span>,</div>
  <div class="ln" style="top:557.14px">223</div><div class="cl" style="top:557.14px">  <span class="v">miles</span>,</div>
  <div class="ln" style="top:608.98px">224</div><div class="cl" style="top:608.98px">  <span class="v">feet</span>,</div>
  <div class="ln" style="top:660.82px">225</div><div class="cl" style="top:660.82px">  <span class="v">annoyingSong</span>,</div>
  <div class="ln" style="top:712.66px">226</div><div class="cl" style="top:712.66px">  <span class="v">grade</span></div>
  <div class="ln" style="top:764.50px">227</div><div class="cl" style="top:764.50px">}</div>
  <svg class="abs" style="left:190px;top:291.10px" width="32" height="8" viewBox="0 0 32 8" fill="#a8a8a8"><circle cx="3.6" cy="4" r="3.2"/><circle cx="15.3" cy="4" r="3.2"/><circle cx="27" cy="4" r="3.2"/></svg>
  <svg class="abs" style="left:130px;top:814px;z-index:-1" width="11" height="17" viewBox="0 0 11 17"><path d="M0 0 L8.2 0 L10 2 L10 5.2 L0.2 16 L0 16 Z" fill="#961c1c"/></svg>
  <div class="abs" style="left:2545.5px;top:0;width:1.5px;height:964px;background:#3a3a3a"></div>
  <div class="abs" style="left:2547px;top:287px;width:13px;height:16px;background:#2f556b"></div>
  <div class="abs" style="left:2547px;top:340px;width:13px;height:16px;background:#2f556b"></div>
  <div class="abs" style="left:2547px;top:363px;width:13px;height:31px;background:#2f556b"></div>
  <div class="abs" style="left:2547px;top:506px;width:13px;height:16px;background:#2f556b"></div>
  <div class="abs" style="left:2547px;top:577.5px;width:13px;height:31.0px;background:#2f556b"></div>
  <div class="abs" style="left:2547px;top:619px;width:13px;height:15.5px;background:#2f556b"></div>
  <div class="abs" style="left:2547px;top:735px;width:13px;height:94px;background:#2f556b"></div>
  <div class="abs" style="left:2547px;top:833px;width:13px;height:19px;background:#2f556b"></div>
  <div class="abs" style="left:2547px;top:852px;width:13px;height:35px;background:#485626"></div>
  <div class="abs" style="left:2547px;top:887px;width:13px;height:6px;background:#62602c"></div>
  <div class="abs" style="left:2547px;top:893px;width:13px;height:10px;background:#5b313b"></div>
  <div class="abs" style="left:2547px;top:243.5px;width:39px;height:4.5px;background:#929292"></div>
  <div class="abs" style="left:0;top:0;width:2586px;height:30px;box-shadow:inset 0 14px 13px -14px #000"></div>
</div>
<div id="panel">
  <div class="ptab on" style="left:64.60000000000002px;letter-spacing:-0.7px">TERMINAL</div>
  <div class="ptab" style="left:285.4000000000001px;letter-spacing:-1.3px">PROBLEMS</div>
  <div class="ptab" style="left:522px;letter-spacing:-0.65px">OUTPUT</div>
  <div class="ptab" style="left:717.2px;letter-spacing:-1.1px">DEBUG CONSOLE</div>
  <div class="abs" style="left:58px;top:93.5px;width:166px;height:3px;background:#e7e7e7"></div>
  <div class="abs" style="left:1654px;top:24.700000000000045px;width:490px;height:52.5px;border-radius:14px;background:#3c3c3c;color:#f0f0f0;font-size:31.7px;line-height:52.5px;"><span class="abs" style="left:25px;top:0">1: node</span><svg class="abs" style="left:439px;top:19.5px" width="26" height="15" viewBox="0 0 26 15" fill="none" stroke="#d4d4d4" stroke-width="2.9"><path d="M1.2 1.2 L13 13 L24.8 1.2"/></svg></div>
  <svg class="abs" style="left:2166.8px;top:31.40000000000009px" width="37" height="38" viewBox="0 0 37 38" fill="none" stroke="#d0d0d0" stroke-width="2.9"><path d="M18.5 0 L18.5 38 M0 19 L37 19"/></svg>
  <svg class="abs" style="left:2218.8px;top:47px" width="22" height="13" viewBox="0 0 22 13" fill="none" stroke="#b5b5b5" stroke-width="2.4"><path d="M1 1 L11 11 L21 1"/></svg>
  <div class="abs" style="left:2263.7px;top:18.799999999999955px;width:64.7px;height:64.2px;border-radius:14px;background:#313232"></div>
  <svg class="abs" style="left:2278.9px;top:31.59999999999991px" width="38" height="38" viewBox="0 0 38 38" fill="none" stroke="#d0d0d0" stroke-width="2.9"><rect x="1.45" y="1.45" width="35.1" height="35.1" rx="3.4"/><path d="M19 1.5 L19 36.5"/></svg>
  <svg class="abs" style="left:2351.6px;top:29px" width="40" height="44" viewBox="0 0 40 44" fill="none" stroke="#d0d0d0" stroke-width="2.6"><path d="M9.1 10 L33.1 10 M15.9 10 L15.9 7.4 Q15.9 5.3 18 5.3 L24.2 5.3 Q26.3 5.3 26.3 7.4 L26.3 10 M13.1 10 L13.1 36.6 Q13.1 39 15.5 39 L26.7 39 Q29.1 39 29.1 36.6 L29.1 10 M18.1 14.3 L18.1 33.6 M24.1 14.3 L24.1 33.6"/></svg>
  <svg class="abs" style="left:2432px;top:43px" width="28" height="16" viewBox="0 0 28 16" fill="none" stroke="#d0d0d0" stroke-width="2.9"><path d="M1.2 14.8 L14 2 L26.8 14.8"/></svg>
  <svg class="abs" style="left:2508.2px;top:39.59999999999991px" width="25" height="25" viewBox="0 0 25 25" fill="none" stroke="#d0d0d0" stroke-width="2.9"><path d="M1 1 L24 24 M24 1 L1 24"/></svg>
  <div class="tl code" style="top:121.5px">  <span class="tw">gradeFunction</span></div>
  <div class="tl code" style="top:162.5px">    <span class="tg">✓</span> <span class="td">expect A</span></div>
  <div class="tl code" style="top:203.5px">    <span class="tg">✓</span> <span class="td">expect A</span></div>
  <div class="tl code" style="top:244.5px">    <span class="tg">✓</span> <span class="td">expect B</span></div>
  <div class="tl code" style="top:285.5px">    <span class="tg">✓</span> <span class="td">expect B (1 ms)</span></div>
  <div class="tl code" style="top:326.5px">    <span class="tg">✓</span> <span class="td">expect C</span></div>
  <div class="tl code" style="top:367.5px">    <span class="tg">✓</span> <span class="td">expect C</span></div>
  <div class="tl code" style="top:408.5px">    <span class="tg">✓</span> <span class="td">expect D</span></div>
  <div class="tl code" style="top:449.5px">    <span class="tg">✓</span> <span class="td">expect D (1 ms)</span></div>
  <div class="tl code" style="top:490.5px">    <span class="tg">✓</span> <span class="td">expect F</span></div>
  <div class="tl code" style="top:531.5px">    <span class="tg">✓</span> <span class="td">expect F</span></div>
  <div class="tl code" style="top:613.5px"><span class="tb">Test Suites: </span><span class="tgb">2 passed</span>, 2 total</div>
  <div class="tl code" style="top:654.5px"><span class="tb">Tests:       </span><span class="tgb">32 passed</span>, 32 total</div>
  <div class="tl code" style="top:695.5px"><span class="tb">Snapshots:   </span>0 total</div>
  <div class="tl code" style="top:736.5px"><span class="tb">Time:</span>        1.07 s, estimated 2 s</div>
  <div class="tl code" style="top:818.5px"><span class="tb">Watch Usage: </span><span class="td">Press </span>w<span class="td"> to show more.</span><span class="cur"></span></div>
</div>
<div id="anno" class="abs" style="left:3002.7px;top:1109.7px;width:135px;height:140px;border-radius:50%;border:12px solid #86ba50;z-index:20"></div>
<div id="status">
  <!-- branch -->
  <svg style="left:47px;top:12px" width="33" height="41" viewBox="0 0 33 41" fill="none" stroke="#ffffff" stroke-width="2.7"><circle cx="7.5" cy="6" r="4.9"/><circle cx="7.5" cy="33.7" r="4.9"/><circle cx="25.3" cy="13.2" r="4.9"/><path d="M7.5 10.9 L7.5 28.8 M25.3 18.1 C25.3 22.5 20 23.2 14 23.6 C10.5 23.9 7.5 25.2 7.5 28.7"/></svg>
  <span class="t" style="left:91.5px;letter-spacing:0.3px">master*</span>
  <!-- sync -->
  <svg style="left:260px;top:14px" width="42" height="36" viewBox="0 0 42 36" fill="none" stroke="#ffffff" stroke-width="2.7"><path d="M8.8 10.2 A13.9 13.9 0 0 1 34.9 20.3 M32.9 24.7 A13.9 13.9 0 0 1 6.8 15.3"/><path d="M29.3 15.4 L34.9 21 L40.5 15.4 M1.2 20.2 L6.8 14.6 L12.4 20.2"/></svg>
  <!-- error -->
  <svg style="left:348.5px;top:14px" width="36" height="36" viewBox="0 0 36 36" fill="none" stroke="#ffffff" stroke-width="2.7"><circle cx="18" cy="18" r="16.3"/><path d="M10.7 10.7 L25.3 25.3 M25.3 10.7 L10.7 25.3"/></svg>
  <span class="t" style="left:397px">0</span>
  <!-- warning -->
  <svg style="left:428.5px;top:14px" width="35" height="34" viewBox="0 0 35 34" fill="none" stroke="#ffffff" stroke-width="2.7" stroke-linejoin="round"><path d="M17.5 2 L33.3 32 L1.7 32 Z"/><path d="M17.5 12.5 L17.5 22" stroke-width="3"/><circle cx="17.5" cy="26.8" r="1.9" fill="#ffffff" stroke="none"/></svg>
  <span class="t" style="left:476px">0</span>
  <!-- live share -->
  <svg style="left:535.6px;top:-0.3px" width="53.6" height="64.3" viewBox="0 0 100 120" fill="none" stroke="#ffffff" stroke-width="5" stroke-linejoin="round"><path d="M16.7 70.6 C17.5 50 33 37.5 50 37.5 L56 37.5 L56 27.6 L79.4 45.6 L56 63.5 L56 53.3 L52 53.3 C38 53.3 26 59.5 19.5 71.5 Z"/><circle cx="42.9" cy="79.8" r="10.7"/></svg>
  <span class="t" style="left:590.4px;letter-spacing:-0.38px">Live Share</span>
  <!-- right side -->
  <span class="t" style="left:1699.8px;letter-spacing:0.32px">Ln 62, Col 32 (5 selected)</span>
  <span class="t" style="left:2147.5px;letter-spacing:0.2px">Spaces: 2</span>
  <span class="t" style="left:2346.5px;letter-spacing:1px">UTF-8</span>
  <span class="t" style="left:2494px">LF</span>
  <span class="t" style="left:2579.6px">JavaScript</span>
  <!-- go live (broadcast) -->
  <svg style="left:2790px;top:13.5px" width="33" height="38" viewBox="0 0 33 38" fill="none" stroke="#ffffff" stroke-width="2.7"><path d="M8.5 27.5 A14.8 14.8 0 1 1 24.5 27.5"/><path d="M11.8 21.5 A8.2 8.2 0 1 1 21.2 21.5"/><circle cx="16.5" cy="15.8" r="2.7" fill="#ffffff" stroke="none"/><path d="M14.2 21 L18.8 21 L18 36 L15 36 Z" fill="#ffffff" stroke-width="1.6"/></svg>
  <span class="t" style="left:2835.6px;letter-spacing:-0.33px">Go Live</span>
  <!-- eslint double check -->
  <svg style="left:2997px;top:20px" width="41" height="26" viewBox="0 0 41 26" fill="none" stroke="#ffffff" stroke-width="2.6"><path d="M1 15.5 L8 23.5 L25 2"/><path d="M13.5 19.5 L17.5 23.5 L39.5 2"/></svg>
  <span class="t" style="left:3046px;letter-spacing:-0.66px">ESLint</span>
  <!-- feedback -->
  <svg style="left:3192px;top:15px" width="38" height="36" viewBox="0 0 38 36" fill="none" stroke="#ffffff" stroke-width="2.6" stroke-linejoin="round"><path d="M14 10 L14 2 L36.5 2 L36.5 18.5 L30 18.5 L24.5 24 L24.5 19"/><circle cx="12" cy="19" r="5.2"/><path d="M1.5 35 C1.5 28 6 25.5 12 25.5 C18 25.5 22.5 28 22.5 35"/><path d="M21.5 7.5 L25.5 11.5 L31.5 5.5" stroke-width="2.3"/></svg>
  <!-- bell -->
  <svg style="left:3281px;top:14px" width="33" height="36" viewBox="0 0 33 36" fill="none" stroke="#ffffff" stroke-width="2.7" stroke-linejoin="round"><path d="M5.5 25 L5.5 13.5 A11 11 0 0 1 27.500 13.5 L27.5 25 L31 29.5 L2 29.5 Z"/><path d="M12.5 30 A4.2 4.2 0 0 0 20.500 30"/></svg>
</div>
</body>
</html>
